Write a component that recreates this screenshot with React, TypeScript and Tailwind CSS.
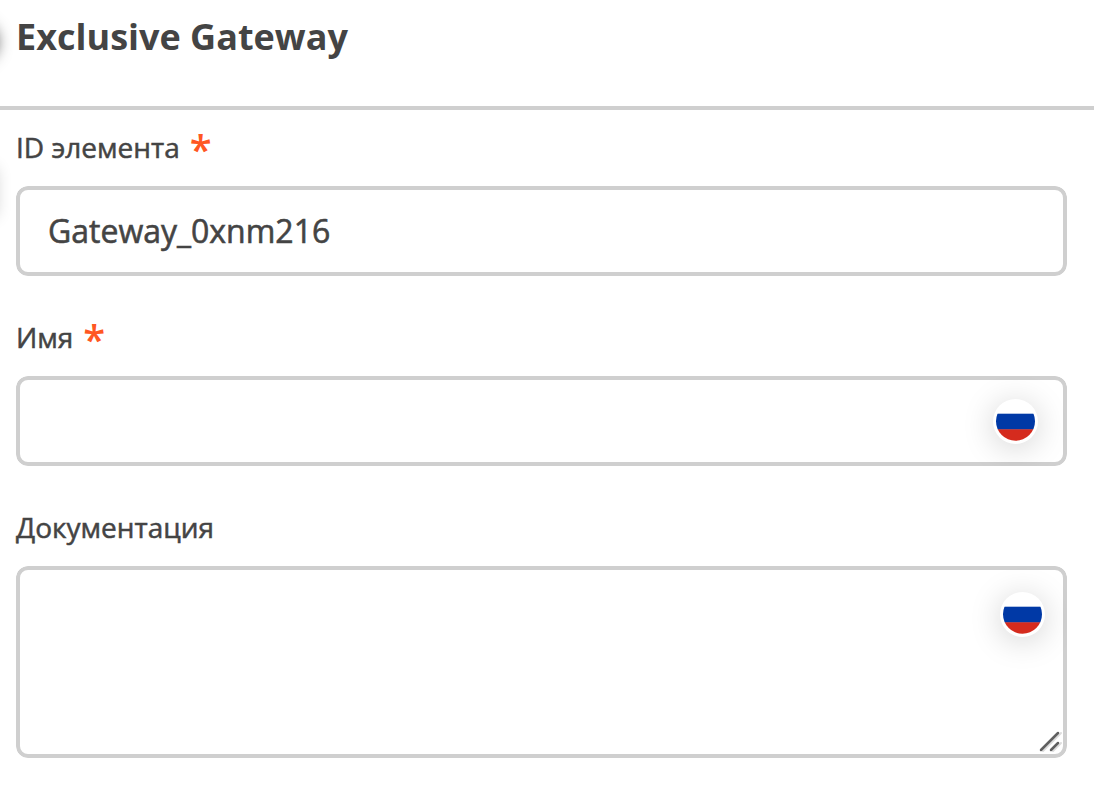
import type { ReactNode } from "react";

function RussianFlag() {
  return (
    <svg viewBox="0 0 45 45" className="block size-[45px]" aria-hidden="true">
      <defs>
        <clipPath id="flag-disc">
          <circle cx="22.5" cy="22.3" r="19.5" />
        </clipPath>
      </defs>
      <g clipPath="url(#flag-disc)">
        <rect width="45" height="15" fill="#ffffff" />
        <rect y="14.7" width="45" height="16" fill="#0039a6" />
        <rect y="30.3" width="45" height="14" fill="#d52b1e" />
      </g>
    </svg>
  );
}

function LanguageButton({ className }: { className: string }) {
  return (
    <button
      type="button"
      aria-label="Русский"
      className={`absolute rounded-full bg-white shadow-[0_4px_32px_rgba(0,0,0,0.18)] ${className}`}
    >
      <RussianFlag />
    </button>
  );
}

function Field({
  id,
  label,
  required,
  children,
}: {
  id: string;
  label: string;
  required?: boolean;
  children: ReactNode;
}) {
  return (
    <div className="flex flex-col gap-3">
      <label
        htmlFor={id}
        className="flex h-[54px] items-center gap-2.5 text-[28px] leading-10 [-webkit-text-stroke:0.018em]"
      >
        {label}
        {required && (
          <span className="pt-1 text-[40px] leading-12 font-semibold text-[#ff5722] [-webkit-text-stroke:0]">
            *
          </span>
        )}
      </label>
      <div className="relative flex overflow-hidden rounded-xl">{children}</div>
    </div>
  );
}

const control =
  "w-full rounded-xl border-4 border-[#cfcfcf] bg-white px-7 text-[32px] outline-none [-webkit-text-stroke:0.018em]";

export default function App() {
  return (
    <main className="relative min-h-screen overflow-hidden bg-white font-['Open_Sans','Noto_Sans',sans-serif] text-[#444444]">
      <div className="absolute top-6 -left-10 h-9 w-9 rounded-full shadow-[0_0_16px_rgba(0,0,0,0.8)]" />
      <div className="absolute top-42 -left-13 h-12 w-12 shadow-[0_0_16px_rgba(0,0,0,0.2)]" />
      <header className="h-[110px] border-b-4 border-[#cfcfcf] px-4 pt-[13px]">
        <h1 className="text-[36px] leading-12 font-bold">Exclusive Gateway</h1>
      </header>
      <form className="flex flex-col gap-[34px] pt-2.5 pr-[27px] pl-4">
        <Field id="element-id" label="ID элемента" required>
          <input
            id="element-id"
            defaultValue="Gateway_0xnm216"
            className={`${control} h-[90px] pb-0.5`}
          />
        </Field>
        <Field id="name" label="Имя" required>
          <input id="name" className={`${control} h-[90px] pb-0.5`} />
          <LanguageButton className="top-[23px] right-[29px]" />
        </Field>
        <Field id="documentation" label="Документация">
          <textarea id="documentation" className={`${control} h-48 resize-none py-5`} />
          <LanguageButton className="top-[26px] right-[22px]" />
          <svg
            viewBox="0 0 24 24"
            className="pointer-events-none absolute right-1 bottom-1 size-6"
            fill="none"
            strokeLinecap="round"
            aria-hidden="true"
          >
            <path d="M4 21 22 3M14 21l8-8" stroke="#dddddd" strokeWidth="2" />
            <path d="M2 20 19 3M12 20l7-7" stroke="#606060" strokeWidth="2.5" />
          </svg>
        </Field>
      </form>
    </main>
  );
}
